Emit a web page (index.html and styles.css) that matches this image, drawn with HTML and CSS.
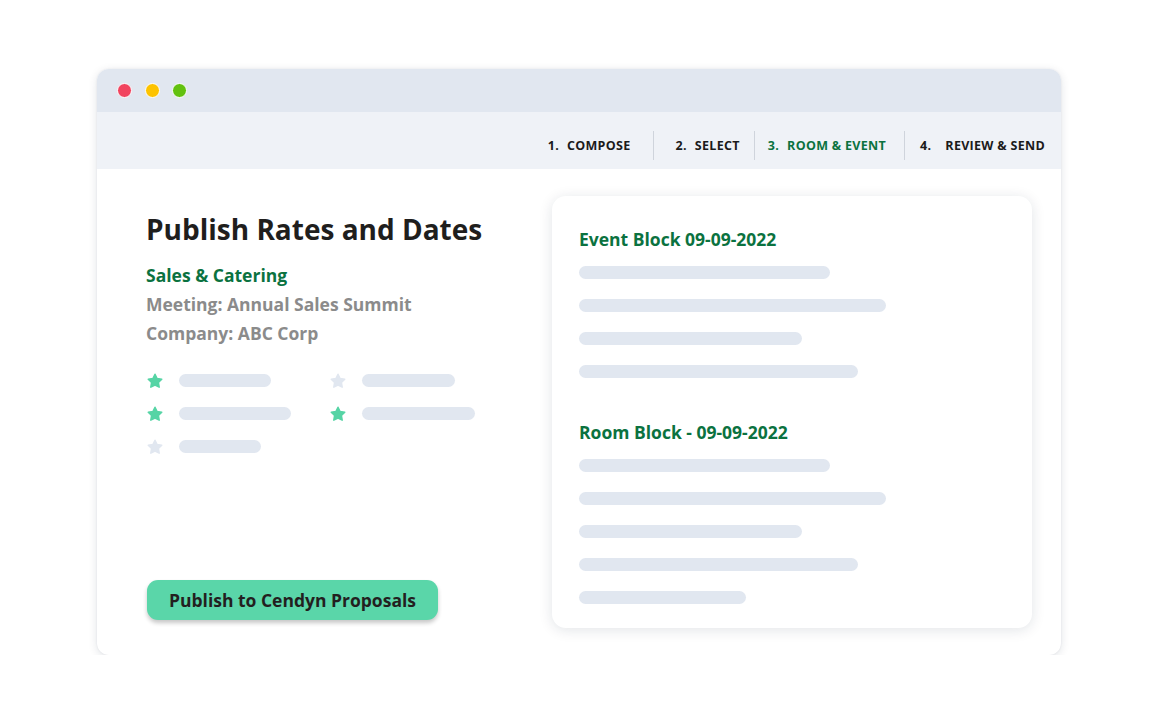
FILE: index.html
```html
<!DOCTYPE html>
<html lang="en">
<head>
<meta charset="utf-8">
<title>Publish Rates and Dates</title>
<link rel="stylesheet" href="styles.css">
</head>
<body>
<div class="window">
  <div class="titlebar">
    <span class="dot dot-red"></span>
    <span class="dot dot-yellow"></span>
    <span class="dot dot-green"></span>
  </div>
  <nav class="steps">
    <div class="step step-1"><span class="num">1.</span>COMPOSE</div>
    <div class="step step-2"><span class="num">2.</span>SELECT</div>
    <div class="step step-3 active"><span class="num">3.</span>ROOM &amp; EVENT</div>
    <div class="step step-4"><span class="num wide">4.</span>REVIEW &amp; SEND</div>
  </nav>
  <main class="content">
    <section class="summary">
      <h1 class="title">Publish Rates and Dates</h1>
      <div class="info">
        <div class="info-accent">Sales &amp; Catering</div>
        <div class="info-muted">Meeting: Annual Sales Summit</div>
        <div class="info-muted">Company: ABC Corp</div>
      </div>
      <div class="ratings">
        <div class="rating"><svg class="star on" viewBox="0 0 24 24"><path d="M12 3l2.8 5.7 6.2.9-4.5 4.4 1.1 6.2L12 17.3l-5.6 2.9 1.1-6.2L3 9.6l6.2-.9z"/></svg><span class="bar" style="width:92px"></span></div>
        <div class="rating"><svg class="star" viewBox="0 0 24 24"><path d="M12 3l2.8 5.7 6.2.9-4.5 4.4 1.1 6.2L12 17.3l-5.6 2.9 1.1-6.2L3 9.6l6.2-.9z"/></svg><span class="bar" style="width:93px"></span></div>
        <div class="rating"><svg class="star on" viewBox="0 0 24 24"><path d="M12 3l2.8 5.7 6.2.9-4.5 4.4 1.1 6.2L12 17.3l-5.6 2.9 1.1-6.2L3 9.6l6.2-.9z"/></svg><span class="bar" style="width:112px"></span></div>
        <div class="rating"><svg class="star on" viewBox="0 0 24 24"><path d="M12 3l2.8 5.7 6.2.9-4.5 4.4 1.1 6.2L12 17.3l-5.6 2.9 1.1-6.2L3 9.6l6.2-.9z"/></svg><span class="bar" style="width:113px"></span></div>
        <div class="rating"><svg class="star" viewBox="0 0 24 24"><path d="M12 3l2.8 5.7 6.2.9-4.5 4.4 1.1 6.2L12 17.3l-5.6 2.9 1.1-6.2L3 9.6l6.2-.9z"/></svg><span class="bar" style="width:82px"></span></div>
      </div>
      <button class="publish" type="button">Publish to Cendyn Proposals</button>
    </section>
    <section class="card">
      <h2 class="block-title">Event Block 09-09-2022</h2>
      <div class="lines">
        <span class="bar line" style="width:251px"></span>
        <span class="bar line" style="width:307px"></span>
        <span class="bar line" style="width:223px"></span>
        <span class="bar line" style="width:279px"></span>
      </div>
      <h2 class="block-title second">Room Block - 09-09-2022</h2>
      <div class="lines">
        <span class="bar line" style="width:251px"></span>
        <span class="bar line" style="width:307px"></span>
        <span class="bar line" style="width:223px"></span>
        <span class="bar line" style="width:279px"></span>
        <span class="bar line" style="width:167px"></span>
      </div>
    </section>
  </main>
</div>
</body>
</html>
```

FILE: styles.css
```css
* {
  box-sizing: border-box;
}

html, body {
  margin: 0;
  background: #ffffff;
}

body {
  padding: 69px 0 0 97px;
  font-family: "Open Sans", "Liberation Sans", sans-serif;
  color: #1f1e1d;
}

.window {
  width: 964px;
  height: 586px;
  border-radius: 12px;
  background: #ffffff;
  box-shadow: 0 2px 10px rgba(20, 30, 60, 0.12), 0 0 2px rgba(20, 30, 60, 0.08);
  display: flex;
  flex-direction: column;
  overflow: hidden;
}

/* window chrome */
.titlebar {
  height: 43px;
  background: #e1e7f0;
  display: flex;
  align-items: center;
  gap: 12.5px;
  padding-left: 20px;
}

.dot {
  width: 15px;
  height: 15px;
  border-radius: 50%;
  border: 1px solid #ffffff;
}

.dot-red { background: #f1445f; }
.dot-yellow { background: #fdc300; }
.dot-green { background: #62c10f; }

/* wizard steps */
.steps {
  height: 57px;
  background: #eff2f7;
  display: flex;
  justify-content: flex-end;
  align-items: center;
  padding: 10px 16px 0 0;
}

.step {
  font-size: 12.5px;
  font-weight: 700;
  letter-spacing: 0.3px;
  color: #1b1b1b;
  line-height: 29px;
  white-space: nowrap;
}

.step + .step {
  border-left: 1.5px solid #cfd4dc;
}

.step .num {
  margin-right: 8px;
}

.step .num.wide {
  margin-right: 14px;
}

.step-1 { padding-right: 22px; }
.step-2 { padding: 0 14px 0 22px; }
.step-3 { padding: 0 18px 0 13px; }
.step-4 { padding-left: 15px; }

.step.active {
  color: #0b7240;
}

/* body */
.content {
  flex: 1;
  display: flex;
  padding: 27px 29px 27px 49px;
}

.summary {
  flex: 1;
  display: flex;
  flex-direction: column;
  align-items: flex-start;
  padding-top: 16px;
}

.title {
  margin: 0;
  font-size: 28px;
  line-height: 34px;
  font-weight: 700;
  color: #1f1e1d;
}

.info {
  margin-top: 15px;
  font-size: 17.5px;
  font-weight: 700;
  line-height: 29px;
}

.info-accent {
  color: #0b7240;
}

.info-muted {
  color: #8b8b8b;
}

.ratings {
  margin-top: 26px;
  display: grid;
  grid-template-columns: 183px 183px;
  row-gap: 20px;
}

.rating {
  display: flex;
  align-items: center;
  gap: 15px;
  height: 13px;
}

.star {
  width: 18px;
  height: 18px;
  fill: #e1e7f0;
  stroke: #e1e7f0;
  stroke-width: 2;
  stroke-linejoin: round;
}

.star.on {
  fill: #56d4a5;
  stroke: #56d4a5;
}

.bar {
  display: block;
  height: 13px;
  border-radius: 7px;
  background: #e1e7f0;
}

.publish {
  margin-top: auto;
  margin-bottom: 8px;
  margin-left: 1px;
  width: 291px;
  height: 40px;
  border: 0;
  border-radius: 11px;
  background: #5ad6a9;
  color: #231f1f;
  font-family: inherit;
  font-size: 17.5px;
  font-weight: 700;
  box-shadow: 0 3px 4px rgba(0, 0, 0, 0.22);
  padding: 0;
}

/* right summary card */
.card {
  width: 480px;
  border-radius: 14px;
  background: #ffffff;
  box-shadow: 0 2px 14px rgba(20, 30, 60, 0.12);
  padding: 32px 27px 0;
}

.block-title {
  margin: 0;
  font-size: 17.5px;
  line-height: 22px;
  font-weight: 700;
  color: #0b7240;
}

.block-title.second {
  margin-top: 43px;
}

.lines {
  display: flex;
  flex-direction: column;
  gap: 20px;
  margin-top: 16px;
}
```
